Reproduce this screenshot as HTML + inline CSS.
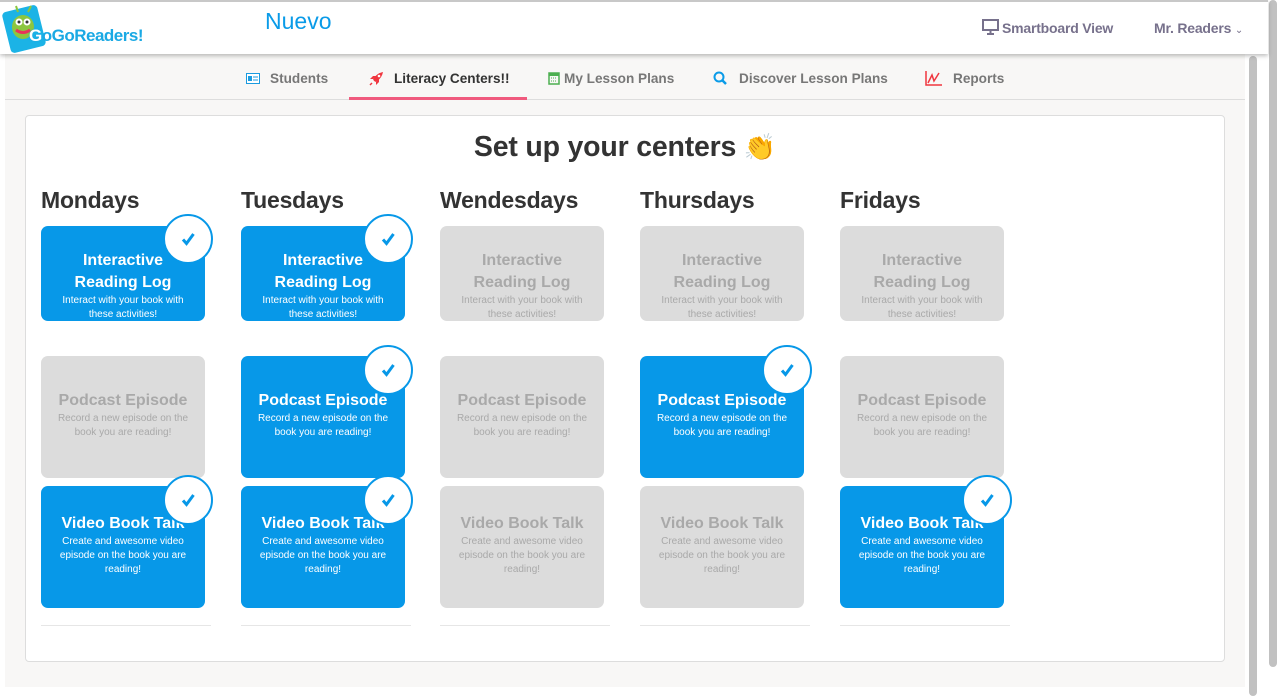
<!DOCTYPE html>
<html><head><meta charset="utf-8"><style>
*{box-sizing:border-box;margin:0;padding:0}
body{width:1280px;height:687px;overflow:hidden;background:#fff;font-family:"Liberation Sans",Arial,sans-serif;position:relative}
.page{position:absolute;left:5px;top:0;width:1240px;height:687px;background:#f8f7f6}
.hdr{position:absolute;left:0;top:0;width:1268px;height:54px;background:#fff;border-top:2px solid #c8c8c8;box-shadow:0 2px 4px rgba(0,0,0,.25);z-index:2}
.nuevo{position:absolute;left:265px;top:6px;font-size:23px;color:#0a9be8}
.hr{position:absolute;top:18px;font-size:14px;font-weight:bold;color:#77718c;letter-spacing:-.2px}
.nav{position:absolute;left:5px;top:54px;width:1240px;height:46px;border-bottom:1px solid #ddd}
.nav span{position:absolute;top:17px;font-size:13.6px;color:#777;font-weight:bold}
.box{position:absolute;left:25px;top:115px;width:1200px;height:547px;background:#fff;border:1px solid #ddd;border-radius:4px}
h1{position:absolute;left:0;width:1200px;top:131px;text-align:center;font-size:28.5px;color:#333;font-weight:bold;letter-spacing:-.2px}
.day{position:absolute;top:187px;font-size:23px;font-weight:bold;color:#333;letter-spacing:-.2px}
.card{position:absolute;width:164px;border-radius:7px;text-align:center;color:#fff;background:#0798e8}
.card.off{background:#dcdcdc;color:#a9a9a9}
.card b{display:block;font-size:16px;line-height:22px}
.card i{display:block;font-style:normal;font-size:10px;line-height:14px;padding:0 10px}
.chk{position:absolute;width:50px;height:50px;border-radius:50%;background:#fff;border:2px solid #0798e8;z-index:3}
.chk svg{position:absolute;left:16px;top:16px}
.line{position:absolute;top:625px;width:170px;height:1px;background:#e6e6e6}
.sb1{position:absolute;left:1249px;top:56px;width:8px;height:640px;background:#c1c1c1;border-radius:4px}
.sb2{position:absolute;left:1269px;top:0;width:8px;height:667px;background:#c1c1c1;border-radius:4px}
</style></head><body>
<div class="page"></div>
<div class="sb1"></div><div class="sb2"></div>
<div class="hdr">
<svg style="position:absolute;left:0;top:0" width="50" height="54"><rect x="6" y="6" width="36" height="42" rx="4" fill="#1bb3e6" transform="rotate(-14 24 27)"/><path d="M18 10 L16 4 M28 10 L31 4" stroke="#8cc63f" stroke-width="2"/><ellipse cx="23" cy="25" rx="11" ry="12" fill="#8cc63f"/><circle cx="19" cy="20" r="3.5" fill="#fff"/><circle cx="27" cy="20" r="3.5" fill="#fff"/><circle cx="19" cy="20" r="1.5" fill="#333"/><circle cx="27" cy="20" r="1.5" fill="#333"/><path d="M16 28 Q23 33 30 28" stroke="#e8335a" stroke-width="3" fill="none"/></svg>
<div style="position:absolute;left:29px;top:24px;font-size:17px;font-weight:bold;color:#1aa9e4;letter-spacing:-.5px"><span style="color:#fff;text-shadow:0 0 2px #1aa9e4">G</span>oGoReaders!</div>
<div class="nuevo">Nuevo</div>
<svg style="position:absolute;left:982px;top:17px" width="17" height="16"><rect x="1" y="1" width="15" height="10" fill="none" stroke="#77718c" stroke-width="2"/><path d="M8.5 11v3M5 15h7" stroke="#77718c" stroke-width="2"/></svg>
<div class="hr" style="left:1002px">Smartboard View</div>
<div class="hr" style="left:1154px">Mr. Readers <span style="font-weight:normal;font-size:10px">&#8964;</span></div>
</div>
<div class="nav">
<svg style="position:absolute;left:241px;top:19px" width="14" height="11"><rect x=".5" y=".5" width="13" height="10" fill="#fff" stroke="#1a9be0"/><rect x="2" y="3" width="4" height="5" fill="#1a9be0"/><path d="M7 4h5M7 7h5" stroke="#1a9be0"/></svg>
<span style="left:265px">Students</span>
<svg style="position:absolute;left:364px;top:17px" width="15" height="15"><path d="M5 10 L4 8 Q8 2 14 1 Q13 7 7 11Z" fill="#f0363f"/><path d="M4 8 L1 8 L4 5 L7 5Z M7 11 L7 14 L10 11 L10 8Z" fill="#f0363f"/><path d="M3 12 L1 14" stroke="#f0363f" stroke-width="1.5"/><circle cx="10" cy="5" r="1.3" fill="#fff"/></svg>
<span style="left:389px;color:#333">Literacy Centers!!</span>
<div style="position:absolute;left:344px;top:43px;width:178px;height:3px;background:#f05a7e"></div>
<svg style="position:absolute;left:543px;top:17px" width="12" height="14"><rect x="1" y="2" width="10" height="11" fill="none" stroke="#4caf50" stroke-width="1.5"/><rect x="1" y="2" width="10" height="3" fill="#4caf50"/><path d="M3 7h6M3 10h6" stroke="#4caf50" stroke-dasharray="1 1"/></svg>
<span style="left:559px">My Lesson Plans</span>
<svg style="position:absolute;left:708px;top:17px" width="14" height="14"><circle cx="6" cy="6" r="4.5" fill="none" stroke="#0a9be8" stroke-width="2"/><path d="M9 9l4 4" stroke="#0a9be8" stroke-width="2.5"/></svg>
<span style="left:734px">Discover Lesson Plans</span>
<svg style="position:absolute;left:920px;top:17px" width="17" height="15"><path d="M1 0v14h16" stroke="#f0363f" stroke-width="1.5" fill="none"/><path d="M3 12 L7 4 L9 10 L14 2" stroke="#f0363f" stroke-width="1.5" fill="none"/></svg>
<span style="left:948px">Reports</span>
</div>
<div class="box"></div>
<h1 style="left:25px">Set up your centers <span style="font-size:26px">👏</span></h1>

<div class="day" style="left:41px">Mondays</div>
<div class="day" style="left:241px">Tuesdays</div>
<div class="day" style="left:440px">Wendesdays</div>
<div class="day" style="left:640px">Thursdays</div>
<div class="day" style="left:840px">Fridays</div>

<div class="card" style="left:41px;top:226px;height:95px;padding-top:24px"><b>Interactive<br>Reading Log</b><i>Interact with your book with these activities!</i></div>
<div class="card" style="left:241px;top:226px;height:95px;padding-top:24px"><b>Interactive<br>Reading Log</b><i>Interact with your book with these activities!</i></div>
<div class="card off" style="left:440px;top:226px;height:95px;padding-top:24px"><b>Interactive<br>Reading Log</b><i>Interact with your book with these activities!</i></div>
<div class="card off" style="left:640px;top:226px;height:95px;padding-top:24px"><b>Interactive<br>Reading Log</b><i>Interact with your book with these activities!</i></div>
<div class="card off" style="left:840px;top:226px;height:95px;padding-top:24px"><b>Interactive<br>Reading Log</b><i>Interact with your book with these activities!</i></div>

<div class="card off" style="left:41px;top:356px;height:122px;padding-top:34px"><b>Podcast Episode</b><i>Record a new episode on the book you are reading!</i></div>
<div class="card" style="left:241px;top:356px;height:122px;padding-top:34px"><b>Podcast Episode</b><i>Record a new episode on the book you are reading!</i></div>
<div class="card off" style="left:440px;top:356px;height:122px;padding-top:34px"><b>Podcast Episode</b><i>Record a new episode on the book you are reading!</i></div>
<div class="card" style="left:640px;top:356px;height:122px;padding-top:34px"><b>Podcast Episode</b><i>Record a new episode on the book you are reading!</i></div>
<div class="card off" style="left:840px;top:356px;height:122px;padding-top:34px"><b>Podcast Episode</b><i>Record a new episode on the book you are reading!</i></div>

<div class="card" style="left:41px;top:486px;height:122px;padding-top:27px"><b>Video Book Talk</b><i>Create and awesome video episode on the book you are reading!</i></div>
<div class="card" style="left:241px;top:486px;height:122px;padding-top:27px"><b>Video Book Talk</b><i>Create and awesome video episode on the book you are reading!</i></div>
<div class="card off" style="left:440px;top:486px;height:122px;padding-top:27px"><b>Video Book Talk</b><i>Create and awesome video episode on the book you are reading!</i></div>
<div class="card off" style="left:640px;top:486px;height:122px;padding-top:27px"><b>Video Book Talk</b><i>Create and awesome video episode on the book you are reading!</i></div>
<div class="card" style="left:840px;top:486px;height:122px;padding-top:27px"><b>Video Book Talk</b><i>Create and awesome video episode on the book you are reading!</i></div>

<div class="chk" style="left:163px;top:214px"><svg width="14" height="14"><path d="M2 7.5 L5.5 11.5 L12.5 2" stroke="#0798e8" stroke-width="3" fill="none"/></svg></div>
<div class="chk" style="left:363px;top:214px"><svg width="14" height="14"><path d="M2 7.5 L5.5 11.5 L12.5 2" stroke="#0798e8" stroke-width="3" fill="none"/></svg></div>
<div class="chk" style="left:363px;top:345px"><svg width="14" height="14"><path d="M2 7.5 L5.5 11.5 L12.5 2" stroke="#0798e8" stroke-width="3" fill="none"/></svg></div>
<div class="chk" style="left:762px;top:345px"><svg width="14" height="14"><path d="M2 7.5 L5.5 11.5 L12.5 2" stroke="#0798e8" stroke-width="3" fill="none"/></svg></div>
<div class="chk" style="left:163px;top:475px"><svg width="14" height="14"><path d="M2 7.5 L5.5 11.5 L12.5 2" stroke="#0798e8" stroke-width="3" fill="none"/></svg></div>
<div class="chk" style="left:363px;top:475px"><svg width="14" height="14"><path d="M2 7.5 L5.5 11.5 L12.5 2" stroke="#0798e8" stroke-width="3" fill="none"/></svg></div>
<div class="chk" style="left:962px;top:475px"><svg width="14" height="14"><path d="M2 7.5 L5.5 11.5 L12.5 2" stroke="#0798e8" stroke-width="3" fill="none"/></svg></div>

<div class="line" style="left:41px"></div>
<div class="line" style="left:241px"></div>
<div class="line" style="left:440px"></div>
<div class="line" style="left:640px"></div>
<div class="line" style="left:840px"></div>
</body></html>
